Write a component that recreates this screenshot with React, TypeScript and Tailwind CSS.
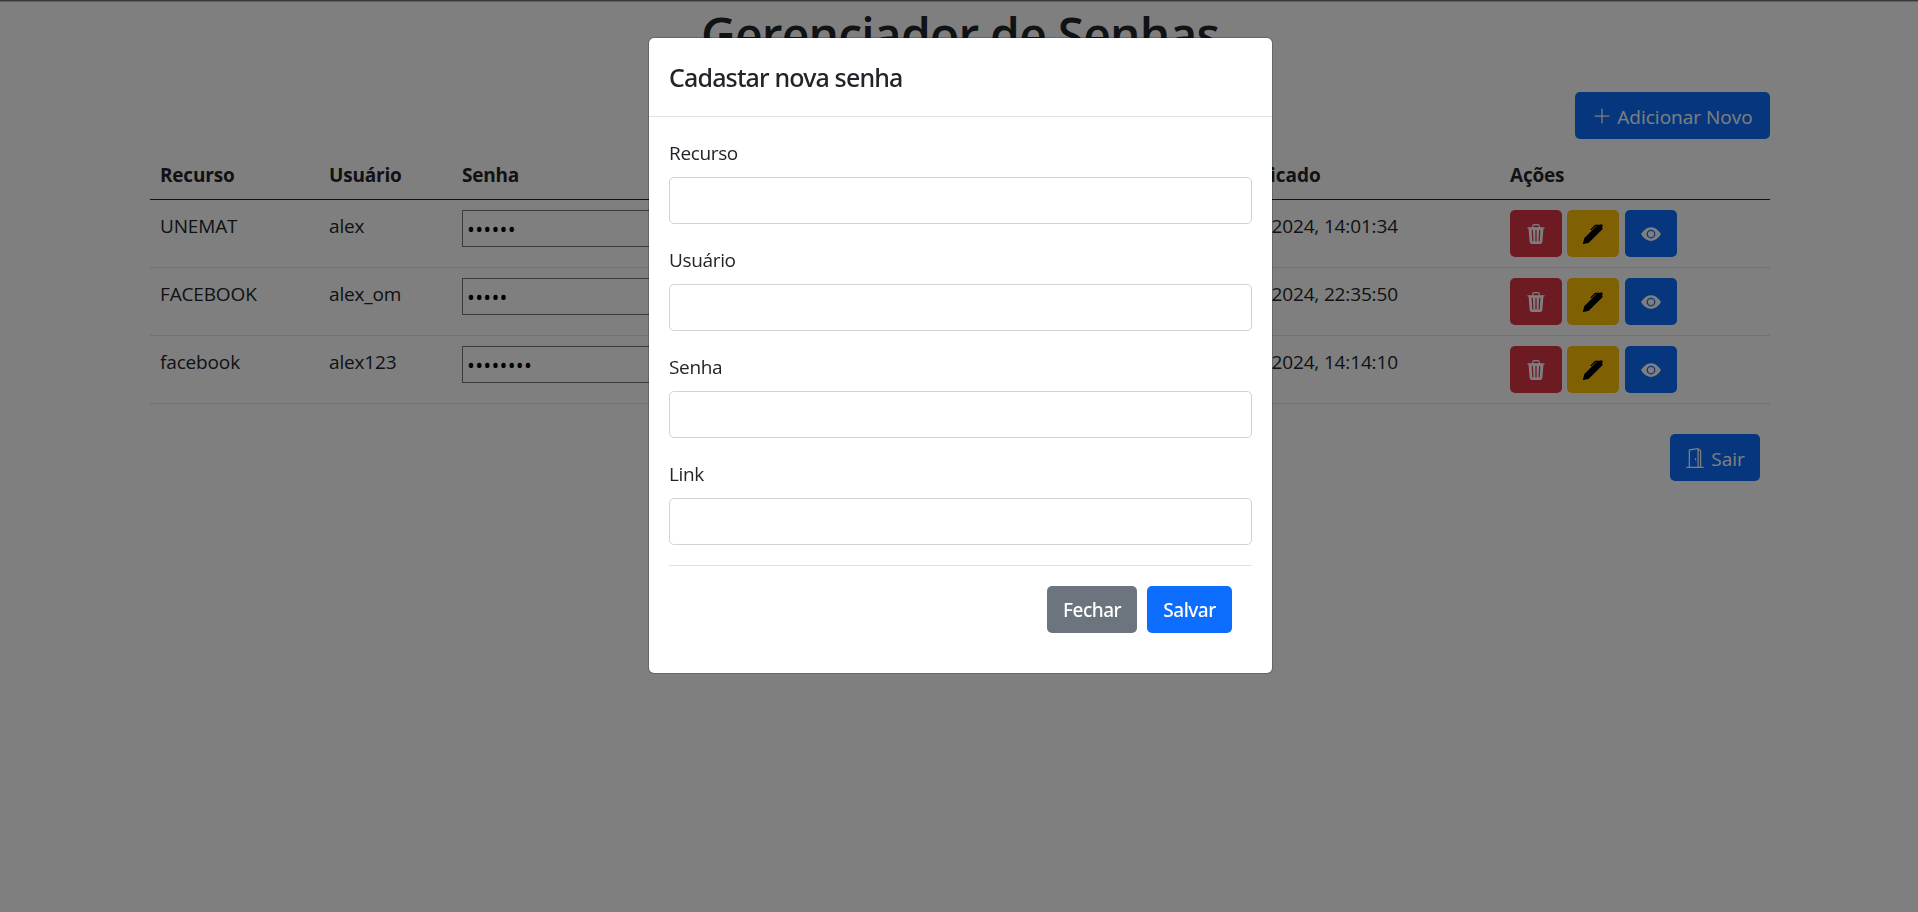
import type { ReactNode } from "react";
import { BsDoorOpen, BsEyeFill, BsPenFill, BsPlusLg, BsTrash3Fill } from "react-icons/bs";

type Entry = {
  recurso: string;
  usuario: string;
  senha: string;
  link: string;
  modificado: string;
};

const entries: Entry[] = [
  { recurso: "UNEMAT", usuario: "alex", senha: "unemat", link: "unemat.br", modificado: "14/03/2024, 14:01:34" },
  { recurso: "FACEBOOK", usuario: "alex_om", senha: "12345", link: "facebook.com", modificado: "13/03/2024, 22:35:50" },
  { recurso: "facebook", usuario: "alex123", senha: "12345678", link: "facebook.com", modificado: "14/03/2024, 14:14:10" },
];

const columns = "grid grid-cols-[169px_133px_320px_433px_295px_270px]";

function IconButton({ className, children }: { className: string; children: ReactNode }) {
  return (
    <button className={`flex h-[47px] w-[52px] items-center justify-center rounded-[5px] ${className}`}>
      {children}
    </button>
  );
}

function Row({ entry }: { entry: Entry }) {
  return (
    <div className={`${columns} h-[68px] border-b border-[#dee2e6] pt-[10px] leading-[32px] tracking-[-0.15px]`}>
      <div className="pl-[10px]">{entry.recurso}</div>
      <div className="pl-[10px]">{entry.usuario}</div>
      <div className="pl-[10px]">
        <input
          type="password"
          readOnly
          defaultValue={entry.senha}
          className="block h-[37px] w-[250px] rounded-none border border-[#767676] bg-white px-[4px] text-[21px] tracking-[0.25px] text-black"
        />
      </div>
      <div className="pl-[10px]">{entry.link}</div>
      <div className="pl-[10px]">{entry.modificado}</div>
      <div className="flex pl-[10px]">
        <IconButton className="bg-[#dc3545] text-white">
          <BsTrash3Fill size={20} />
        </IconButton>
        <IconButton className="ml-[5px] bg-[#ffc107] text-black">
          <BsPenFill size={20} />
        </IconButton>
        <IconButton className="ml-[6px] bg-[#0d6efd] text-white">
          <BsEyeFill size={20} />
        </IconButton>
      </div>
    </div>
  );
}

function Field({ label }: { label: string }) {
  return (
    <label className="mb-[20px] block">
      <span className="mb-[8px] block leading-[32px] tracking-[-0.35px]">{label}</span>
      <input type="text" className="block h-[47px] w-full rounded-[5px] border border-[#ced4da] bg-white px-[15px]" />
    </label>
  );
}

function NewPasswordModal() {
  return (
    <div className="fixed inset-0 flex items-start justify-center bg-black/50 pt-[37px] pl-[3px]">
      <div className="h-[637px] w-[625px] rounded-[6px] border border-black/20 bg-white bg-clip-padding">
        <div className="flex h-[79px] items-center border-b border-[#dee2e6] px-[20px] pt-[2px]">
          <h2 className="font-['Noto_Sans',sans-serif] text-[25px] font-medium tracking-[-0.85px]">
            Cadastar nova senha
          </h2>
        </div>
        <div className="px-[20px] pt-[20px]">
          <Field label="Recurso" />
          <Field label="Usuário" />
          <Field label="Senha" />
          <Field label="Link" />
          <div className="flex justify-end gap-[10px] border-t border-[#dee2e6] px-[20px] pt-[20px] font-['Noto_Sans',sans-serif] font-medium tracking-[-0.5px] text-white">
            <button className="h-[47px] w-[90px] rounded-[5px] bg-[#6c757d] pt-[2px]">Fechar</button>
            <button className="h-[47px] w-[85px] rounded-[5px] bg-[#0d6efd] pt-[2px]">Salvar</button>
          </div>
        </div>
      </div>
    </div>
  );
}

export default function App() {
  return (
    <div className="h-screen overflow-hidden border-t border-[#707070] bg-white font-['Open_Sans','Noto_Sans',sans-serif] text-[19px] text-[#212529]">
      <div className="h-px bg-[#c0c0c0]" />
      <main className="mx-auto w-[1620px] translate-x-[1px]">
        <h1 className="h-[60px] text-center text-[48px] leading-[65px] font-semibold tracking-[-0.8px]">
          Gerenciador de Senhas
        </h1>
        <div className="mt-[30px] flex justify-end">
          <button className="flex h-[47px] w-[195px] items-center justify-center gap-[5px] rounded-[5px] bg-[#0d6efd] text-white">
            <BsPlusLg size={20} />
            <span className="pt-[3px]">Adicionar Novo</span>
          </button>
        </div>
        <div className={`${columns} mt-[10px] h-[51px] border-b border-[#212529] pt-[10px] leading-[32px] font-bold tracking-[-0.2px]`}>
          <div className="pl-[10px]">Recurso</div>
          <div className="pl-[10px]">Usuário</div>
          <div className="pl-[10px]">Senha</div>
          <div className="pl-[10px]">Link</div>
          <div className="pl-[10px] tracking-normal">Modificado</div>
          <div className="pl-[10px]">Ações</div>
        </div>
        {entries.map((entry) => (
          <Row key={entry.modificado} entry={entry} />
        ))}
        <div className="mt-[30px] flex justify-end pr-[10px]">
          <button className="flex h-[47px] w-[90px] items-center justify-center gap-[6px] rounded-[5px] bg-[#0d6efd] text-white">
            <BsDoorOpen size={20} />
            <span className="pt-[3px]">Sair</span>
          </button>
        </div>
      </main>
      <NewPasswordModal />
    </div>
  );
}
